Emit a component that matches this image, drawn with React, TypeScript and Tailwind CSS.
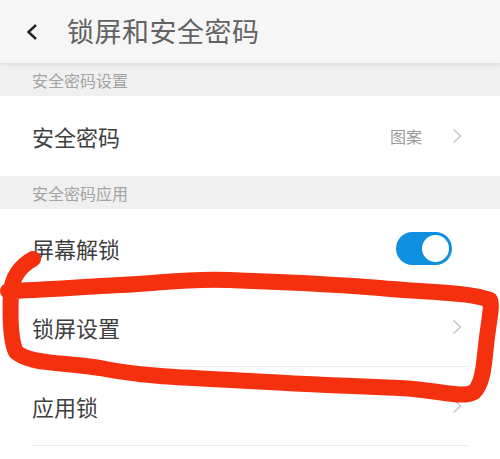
import React from "react";

/* ─── Little grey chevron used at the end of a row ─── */
function Chevron() {
  return (
    <svg width="10" height="16" viewBox="0 0 10 16" className="shrink-0">
      <path d="M1.5 1.5 L8.5 8 L1.5 14.5" fill="none" stroke="#c4c4c4" strokeWidth="1.4" />
    </svg>
  );
}

function SectionLabel({ text }: { text: string }) {
  return (
    <div className="h-[33px] flex items-center pl-[32px] bg-[#f0f0f0] text-[16px] text-[#a3a3a3]">
      {text}
    </div>
  );
}

function Row({ label, children }: { label: string; children?: React.ReactNode }) {
  return (
    <div className="h-[79px] mx-[32px] flex items-center justify-between border-b border-[#ebebeb]">
      <span className="text-[22px] text-[#3e3e3e]">{label}</span>
      <div className="flex items-center pr-[6px]">{children}</div>
    </div>
  );
}

function Toggle() {
  return (
    <div className="w-[56px] h-[33px] rounded-full bg-[#0e8fe0] flex items-center justify-end pr-[3px] mr-[10px]">
      <div className="w-[27px] h-[27px] rounded-full bg-white" />
    </div>
  );
}

export default function App() {
  return (
    <div
      className="relative w-[500px] h-[459px] overflow-hidden bg-white"
      style={{ fontFamily: '"Noto Sans CJK SC", "Noto Sans", sans-serif' }}
    >
      {/* ── Top bar ── */}
      <div className="relative z-10 h-[63px] flex items-center bg-[#f6f6f6] shadow-[0_2px_3px_rgba(0,0,0,0.08)]">
        <svg width="14" height="18" viewBox="0 0 14 18" className="ml-[25px] mr-[28px]">
          <path d="M11 2 L3.5 9 L11 16" fill="none" stroke="#222" strokeWidth="2.4" />
        </svg>
        <span className="text-[27px] text-[#626262] tracking-[0.5px]">锁屏和安全密码</span>
      </div>

      <SectionLabel text="安全密码设置" />
      <div className="h-[80px] mx-[32px] flex items-center justify-between">
        <span className="text-[22px] text-[#3e3e3e]">安全密码</span>
        <div className="flex items-center gap-[30px] pr-[6px]">
          <span className="text-[16px] text-[#9a9a9a]">图案</span>
          <Chevron />
        </div>
      </div>

      <SectionLabel text="安全密码应用" />
      <Row label="屏幕解锁">
        <Toggle />
      </Row>
      <Row label="锁屏设置">
        <Chevron />
      </Row>
      <Row label="应用锁">
        <Chevron />
      </Row>

      {/* ── Hand-drawn red annotation ── */}
      <svg
        className="absolute inset-0 pointer-events-none"
        width="500"
        height="459"
        viewBox="0 0 500 459"
      >
        <path
          d="M33 259 C20 266, 12 278, 11 292 C10 315, 10 340, 16 352 C30 364, 60 362, 100 368 C150 378, 200 378, 250 381 C300 384, 350 386, 400 388 C440 390, 462 399, 474 392 C485 382, 484 355, 488 330 C490 315, 492 305, 490 300 C470 292, 420 292, 380 288 C320 283, 280 282, 230 280 C180 278, 160 284, 120 285 C80 287, 40 290, 8 291"
          fill="none"
          stroke="#f5300f"
          strokeWidth="16"
          strokeLinecap="round"
          strokeLinejoin="round"
        />
      </svg>
    </div>
  );
}
